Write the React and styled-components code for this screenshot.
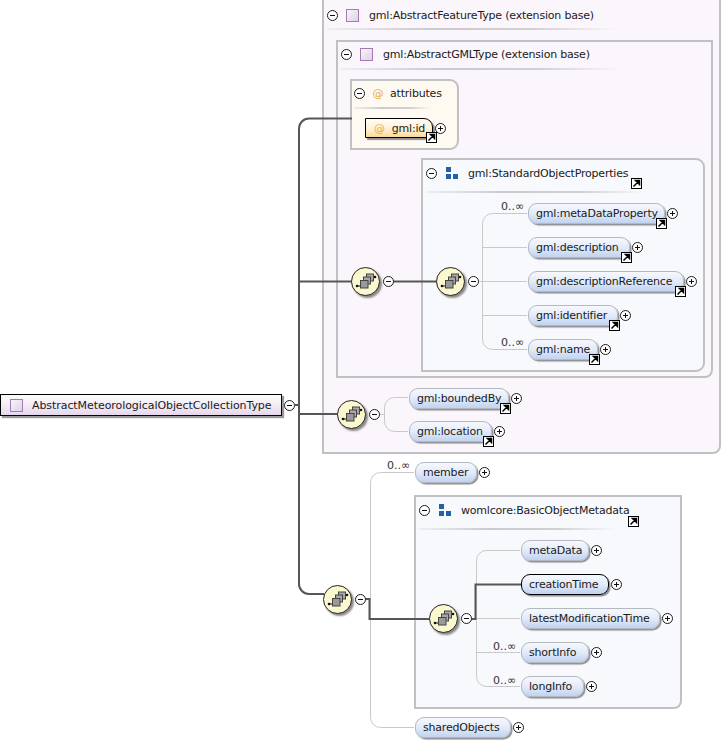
import React from 'react'
import styled, { createGlobalStyle } from 'styled-components'

const GlobalStyle = createGlobalStyle`
  html, body {
    margin: 0;
    padding: 0;
    background: #fff;
  }
  body {
    font-family: "DejaVu Sans", "Liberation Sans", sans-serif;
    font-size: 11px;
    letter-spacing: -0.2px;
    color: #1a1a1a;
  }
`

const sopElements = [
  { x: 528, y: 203, w: 137, label: 'gml:metaDataProperty', link: true },
  { x: 528, y: 237, w: 102, label: 'gml:description', link: true },
  { x: 528, y: 271, w: 156, label: 'gml:descriptionReference', link: true },
  { x: 528, y: 305, w: 90, label: 'gml:identifier', link: true },
  { x: 528, y: 339, w: 70, label: 'gml:name', link: true },
  { x: 409, y: 388, w: 100, label: 'gml:boundedBy', link: true },
  { x: 409, y: 421, w: 83, label: 'gml:location', link: true },
  { x: 415, y: 462, w: 62, label: 'member' },
  { x: 521, y: 540, w: 68, label: 'metaData' },
  { x: 521, y: 574, w: 88, label: 'creationTime', active: true },
  { x: 521, y: 608, w: 139, label: 'latestModificationTime' },
  { x: 521, y: 642, w: 68, label: 'shortInfo' },
  { x: 521, y: 676, w: 63, label: 'longInfo' },
  { x: 415, y: 717, w: 96, label: 'sharedObjects' }
]

const sequences = [
  { x: 351, y: 267 },
  { x: 436, y: 267 },
  { x: 337, y: 400 },
  { x: 323, y: 585 },
  { x: 429, y: 604 }
]

const cardinalities = [
  { x: 501, y: 200 },
  { x: 501, y: 336 },
  { x: 387, y: 459 },
  { x: 493, y: 640 },
  { x: 493, y: 674 }
]

const thinWires = [
  'M473 281.5H482.5M527 213.5H492.5A10 10 0 0 0 482.5 223.5V339.5A10 10 0 0 0 492.5 349.5H527M482.5 247.5H527M482.5 281.5H527M482.5 315.5H527',
  'M380 414.5H384.5M408 397.5H394.5A10 10 0 0 0 384.5 407.5V421.5A10 10 0 0 0 394.5 431.5H408',
  'M414 472.5H380.5A10 10 0 0 0 370.5 482.5V717.5A10 10 0 0 0 380.5 727.5H414',
  'M520 550.5H486.5A10 10 0 0 0 476.5 560.5V676.5A10 10 0 0 0 486.5 686.5H520M476.5 618.5H520M476.5 652.5H520'
]

const thickWires = [
  'M352 118.5H309A10 10 0 0 0 299 128.5V584A10 10 0 0 0 309 594H324',
  'M295 405H299M299 281.5H352M299 414H338',
  'M393 281.5H437',
  'M365 599H369.5V619H429',
  'M471 619H475.5V584.5H521'
]

const Canvas = styled.div`
  position: relative;
  width: 722px;
  height: 743px;
  overflow: hidden;
  background: #fff;
`

const Panel = styled.section`
  position: absolute;
  left: ${p => p.$x}px;
  top: ${p => p.$y}px;
  width: ${p => p.$w}px;
  height: ${p => p.$h}px;
  box-sizing: border-box;
  padding: ${p => p.$pad};
  border: 2px solid #c1c0c2;
  border-radius: ${p => p.$radius || '0 0 8px 0'};
  background: ${p => p.$bg};
`

const PanelHead = styled.header`
  display: flex;
  align-items: center;
  height: 16px;
  white-space: nowrap;
`

const HeadIcon = styled.span`
  display: flex;
  justify-content: center;
  width: ${p => p.$w || 13}px;
  margin: 0 ${p => p.$gap || 10}px 0 ${p => p.$left || 8}px;
`

const Rule = styled.div`
  width: ${p => p.$w}px;
  height: 2px;
  margin-top: ${p => p.$top}px;
  background: linear-gradient(90deg, #f0eef1 0%, #cbcacc 35%, #d0cfd1 70%, rgba(220, 218, 222, 0) 100%);
`

const Circle = styled.span`
  flex: none;
  display: block;
  width: 11px;
  height: 11px;
  box-sizing: border-box;
  border: 1px solid #1c1c1c;
  border-radius: 50%;
  background: #fff;
  position: relative;

  &::before {
    content: '';
    position: absolute;
    left: 2px;
    top: 4px;
    width: 5px;
    height: 1px;
    background: #111;
  }

  ${p => p.$plus && `
    &::after {
      content: '';
      position: absolute;
      left: 4px;
      top: 2px;
      width: 1px;
      height: 5px;
      background: #111;
    }
  `}
`

const TypeSquare = styled.span`
  flex: none;
  display: block;
  width: 13px;
  height: 13px;
  box-sizing: border-box;
  border: 1px solid #a678b5;
  background: linear-gradient(135deg, #faf6fb, #dcd2e4);
`

const AtSign = styled.span`
  color: #eda93c;
  font-size: 11px;
  line-height: 1;
`

const Root = styled.div`
  position: absolute;
  left: 0;
  top: 394px;
  display: flex;
  align-items: center;
  gap: 2px;
`

const RootBox = styled.div`
  display: flex;
  align-items: center;
  gap: 9px;
  width: 282px;
  height: 22px;
  box-sizing: border-box;
  padding-left: 9px;
  border: 1px solid #000;
  background: linear-gradient(180deg, #fdfbfe 0%, #f4eef7 45%, #e6d7ec 100%);
  box-shadow: 2px 2px 1px #9a9a9a;
  letter-spacing: -0.07px;
  white-space: nowrap;
`

const Node = styled.div`
  position: absolute;
  left: ${p => p.$x}px;
  top: ${p => p.$y}px;
  display: flex;
  align-items: center;
  gap: 2px;
`

const Pill = styled.div`
  position: relative;
  display: flex;
  align-items: center;
  width: ${p => p.$w}px;
  height: 21px;
  box-sizing: border-box;
  padding-left: 7px;
  border: 1px solid ${p => (p.$active ? '#000' : '#b4b8c0')};
  border-radius: 9px;
  background: linear-gradient(180deg, #f6f8fd 0%, #e3ebf9 50%, #c0d3f0 100%);
  box-shadow: 1.5px 1.5px 1px #8f8f93;
  white-space: nowrap;
`

const IdBox = styled.div`
  position: relative;
  display: flex;
  align-items: center;
  gap: 7px;
  width: 68px;
  height: 20px;
  box-sizing: border-box;
  padding-left: 8px;
  border: 1px solid #000;
  border-radius: 0 9px 0 0;
  background: linear-gradient(180deg, #fffdf8 0%, #fff3d8 50%, #fcd99c 100%);
  box-shadow: 2px 2px 1px #8f8f8f;
  white-space: nowrap;
`

const LinkBadge = styled.svg`
  position: absolute;
  right: ${p => p.$right}px;
  bottom: ${p => p.$bottom}px;
  width: 11px;
  height: 11px;
`

const PlainLink = styled.svg`
  position: absolute;
  left: ${p => p.$x}px;
  top: ${p => p.$y}px;
  width: 11px;
  height: 11px;
`

const Wires = styled.svg`
  position: absolute;
  left: 0;
  top: 0;
  width: 722px;
  height: 743px;
  fill: none;
`

const Sequence = styled.div`
  position: absolute;
  left: ${p => p.$x}px;
  top: ${p => p.$y}px;
  display: flex;
  align-items: center;
  gap: 3px;
`

const SequenceDisc = styled.span`
  display: flex;
  align-items: center;
  justify-content: center;
  width: 29px;
  height: 29px;
  box-sizing: border-box;
  border: 1px solid #222;
  border-radius: 50%;
  background: #fbf8cf;
  box-shadow: 2px 2px 2px #8a8a8a;
`

const Cardinality = styled.span`
  position: absolute;
  left: ${p => p.$x}px;
  top: ${p => p.$y}px;
  font-size: 11px;
  line-height: 14px;
  letter-spacing: 0;
  color: #333;
`

const LinkIcon = props => (
  <svg viewBox="0 0 11 11" {...props}>
    <rect x="0.5" y="0.5" width="10" height="10" fill="#fff" stroke="#000" />
    <path d="M2.5 8.5 L6.5 4.5 M4.5 2.5 H8.5 V6.5 Z" stroke="#000" strokeWidth="1.5" fill="#000" />
  </svg>
)

const StyledBadge = styled(LinkBadge).attrs({ as: LinkIcon })``
const StyledPlainLink = styled(PlainLink).attrs({ as: LinkIcon })``

const GroupIcon = () => (
  <svg width="12" height="12" viewBox="0 0 12 12">
    <rect x="0" y="0" width="5" height="5" fill="#1f62a8" />
    <rect x="0" y="7" width="5" height="5" fill="#1f62a8" />
    <rect x="7" y="7" width="5" height="5" fill="#1f62a8" />
  </svg>
)

const SequenceIcon = () => (
  <svg width="22" height="20" viewBox="0 0 22 20">
    <path d="M2 14H5M16 5H20" stroke="#111" strokeWidth="1" />
    <circle cx="2" cy="14" r="1.3" fill="#111" />
    <circle cx="20" cy="5" r="1.3" fill="#111" />
    <rect x="11.5" y="2" width="7" height="7" fill="#a8a8a8" stroke="#444" />
    <rect x="8.5" y="5" width="7" height="7" fill="#a8a8a8" stroke="#444" />
    <rect x="5.5" y="8.5" width="7.5" height="7.5" fill="#9a9a9a" stroke="#444" />
  </svg>
)

const App = () => (
  <Canvas>
    <GlobalStyle />

    <Panel $x={322} $y={-8} $w={399} $h={462} $bg="#faf6fb" $pad="13px 3px">
      <PanelHead>
        <Circle />
        <HeadIcon><TypeSquare /></HeadIcon>
        gml:AbstractFeatureType (extension base)
      </PanelHead>
      <Rule $w={290} $top={5} />
    </Panel>

    <Panel $x={336} $y={40} $w={377} $h={338} $bg="#faf6fb" $pad="4px 3px">
      <PanelHead>
        <Circle />
        <HeadIcon><TypeSquare /></HeadIcon>
        gml:AbstractGMLType (extension base)
      </PanelHead>
      <Rule $w={280} $top={6} />
    </Panel>

    <Panel $x={350} $y={79} $w={109} $h={71} $bg="#fefaf1" $radius="0 9px 9px 0" $pad="4px 2px">
      <PanelHead>
        <Circle />
        <HeadIcon $left={8} $gap={7} $w={10}><AtSign>@</AtSign></HeadIcon>
        attributes
      </PanelHead>
      <Rule $w={78} $top={6} />
    </Panel>

    <Panel $x={421} $y={158} $w={284} $h={214} $bg="#f8f9fd" $radius="0 9px 9px 0" $pad="5px 3px">
      <PanelHead>
        <Circle />
        <HeadIcon $left={9} $gap={10} $w={12}><GroupIcon /></HeadIcon>
        gml:StandardObjectProperties
      </PanelHead>
      <Rule $w={218} $top={10} />
    </Panel>

    <Panel $x={414} $y={495} $w={268} $h={214} $bg="#f8f9fd" $pad="5px 3px">
      <PanelHead>
        <Circle />
        <HeadIcon $left={9} $gap={10} $w={12}><GroupIcon /></HeadIcon>
        womlcore:BasicObjectMetadata
      </PanelHead>
      <Rule $w={196} $top={10} />
    </Panel>

    <Wires viewBox="0 0 722 743">
      {thinWires.map(d => <path key={d} d={d} stroke="#c9c9c9" />)}
      {thickWires.map(d => <path key={d} d={d} stroke="#565656" strokeWidth="2" />)}
    </Wires>

    <Root>
      <RootBox>
        <TypeSquare />
        AbstractMeteorologicalObjectCollectionType
      </RootBox>
      <Circle />
    </Root>

    <Node $x={365} $y={118}>
      <IdBox>
        <AtSign>@</AtSign>
        gml:id
        <StyledBadge $right={-5} $bottom={-6} />
      </IdBox>
      <Circle $plus />
    </Node>

    <StyledPlainLink $x={631} $y={178} />
    <StyledPlainLink $x={628} $y={516} />

    {sequences.map(s => (
      <Sequence key={`${s.x}-${s.y}`} $x={s.x} $y={s.y}>
        <SequenceDisc><SequenceIcon /></SequenceDisc>
        <Circle />
      </Sequence>
    ))}

    {cardinalities.map(c => (
      <Cardinality key={`${c.x}-${c.y}`} $x={c.x} $y={c.y}>0..∞</Cardinality>
    ))}

    {sopElements.map(el => (
      <Node key={el.label} $x={el.x} $y={el.y}>
        <Pill $w={el.w} $active={el.active}>
          {el.label}
          {el.link && <StyledBadge $right={-3} $bottom={-6} />}
        </Pill>
        <Circle $plus />
      </Node>
    ))}
  </Canvas>
)

export default App
